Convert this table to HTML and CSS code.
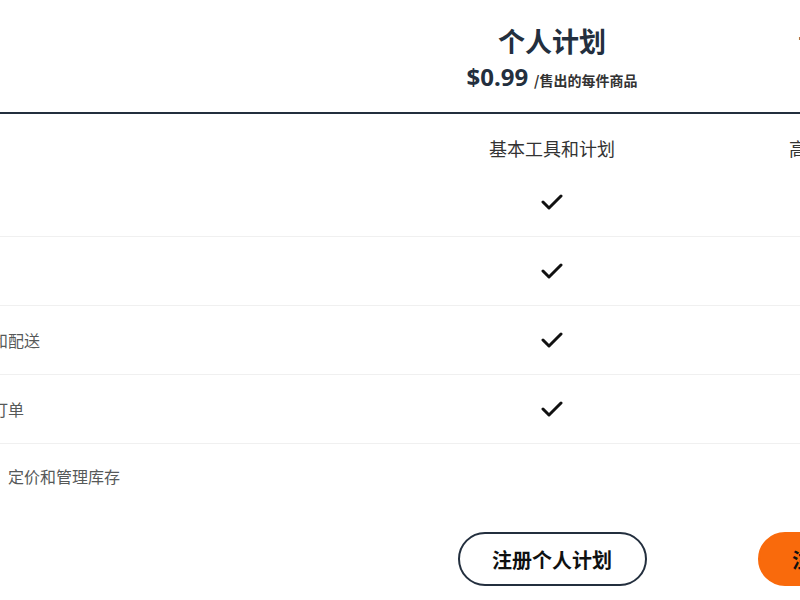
FILE: index.html
```html
<!DOCTYPE html>
<html lang="zh-CN">

<head>
  <meta charset="UTF-8">
  <title>销售计划对比</title>
  <link rel="stylesheet" href="styles.css">
</head>

<body>
  <div class="viewport">
    <div class="plans">

      <!-- Plan headers -->
      <div class="row header-row">
        <div class="cell feature"></div>
        <div class="cell plan">
          <h2 class="plan-title">个人计划</h2>
          <div class="plan-price"><span class="amount">$0.99</span><span class="unit">/售出的每件商品</span></div>
        </div>
        <div class="cell plan">
          <h2 class="plan-title">专业计划</h2>
          <div class="plan-price"><span class="amount">$39.99</span><span class="unit">/月</span></div>
        </div>
      </div>

      <!-- Plan summary -->
      <div class="row summary-row">
        <div class="cell feature"></div>
        <div class="cell plan">基本工具和计划</div>
        <div class="cell plan">高级工具和功能</div>
      </div>

      <!-- Features -->
      <div class="row feature-row">
        <div class="cell feature">全球销售</div>
        <div class="cell plan"><svg class="check" viewBox="0 0 22 18"><polyline points="2,9 8,15 20,3" /></svg></div>
        <div class="cell plan"><svg class="check" viewBox="0 0 22 18"><polyline points="2,9 8,15 20,3" /></svg></div>
      </div>
      <div class="row feature-row">
        <div class="cell feature">创建商品信息</div>
        <div class="cell plan"><svg class="check" viewBox="0 0 22 18"><polyline points="2,9 8,15 20,3" /></svg></div>
        <div class="cell plan"><svg class="check" viewBox="0 0 22 18"><polyline points="2,9 8,15 20,3" /></svg></div>
      </div>
      <div class="row feature-row">
        <div class="cell feature">管理订单履行和配送</div>
        <div class="cell plan"><svg class="check" viewBox="0 0 22 18"><polyline points="2,9 8,15 20,3" /></svg></div>
        <div class="cell plan"><svg class="check" viewBox="0 0 22 18"><polyline points="2,9 8,15 20,3" /></svg></div>
      </div>
      <div class="row feature-row">
        <div class="cell feature">管理您的全部订单</div>
        <div class="cell plan"><svg class="check" viewBox="0 0 22 18"><polyline points="2,9 8,15 20,3" /></svg></div>
        <div class="cell plan"><svg class="check" viewBox="0 0 22 18"><polyline points="2,9 8,15 20,3" /></svg></div>
      </div>
      <div class="row feature-row last">
        <div class="cell feature">批量上传商品、定价和管理库存</div>
        <div class="cell plan"></div>
        <div class="cell plan"><svg class="check" viewBox="0 0 22 18"><polyline points="2,9 8,15 20,3" /></svg></div>
      </div>

      <!-- Sign up buttons -->
      <div class="row action-row">
        <div class="cell feature"></div>
        <div class="cell plan"><button class="signup">注册个人计划</button></div>
        <div class="cell plan"><button class="signup primary">注册专业计划</button></div>
      </div>

    </div>
  </div>
</body>

</html>
```

FILE: styles.css
```css
body {
  margin: 0;
  padding: 0;
  background-color: #fff;
  font-family: "Noto Sans", "Noto Sans CJK SC", sans-serif;
  color: #0f1111;
}

/* the table is wider than the window, scrolled a little to the right */
.viewport {
  width: 800px;
  height: 600px;
  overflow: hidden;
}

.plans {
  width: 1106px;
  margin-left: -104px;
}

.row {
  display: grid;
  grid-template-columns: 506px 300px 300px;
}

.cell {
  display: flex;
  align-items: center;
}

.plan {
  flex-direction: column;
  justify-content: center;
  text-align: center;
}

.header-row {
  height: 114px;
  box-sizing: border-box;
  border-bottom: 2px solid #232f3e;
}

.header-row .plan {
  justify-content: flex-start;
  padding-top: 24px;
}

.plan-title {
  margin: 0;
  font-family: "Noto Sans CJK SC", sans-serif;
  font-size: 27px;
  line-height: 34px;
  font-weight: 700;
  color: #232f3e;
}

.plan-price {
  margin-top: 5px;
  display: flex;
  align-items: baseline;
  gap: 6px;
  line-height: 28px;
}

.amount {
  font-size: 24px;
  font-weight: 700;
  color: #232f3e;
}

.unit {
  font-family: "Noto Sans CJK SC", sans-serif;
  font-size: 14px;
  font-weight: 700;
  color: #333;
}

.summary-row {
  height: 54px;
  box-sizing: border-box;
  padding-top: 22px;
  align-items: start;
}

.summary-row .plan {
  font-family: "Noto Sans CJK SC", sans-serif;
  font-size: 18px;
  line-height: 24px;
  color: #333;
}

.feature-row {
  height: 69px;
  box-sizing: border-box;
  border-bottom: 1px solid #f0f0f0;
}

.feature-row.last {
  height: 64px;
  border-bottom: none;
}

.feature {
  font-family: "Noto Sans CJK SC", sans-serif;
  font-size: 16px;
  color: #565959;
  white-space: nowrap;
}

.check {
  width: 22px;
  height: 18px;
  fill: none;
  stroke: #111;
  stroke-width: 3;
  stroke-linecap: round;
  stroke-linejoin: round;
}

.action-row {
  padding-top: 24px;
}

.signup {
  width: 189px;
  height: 54px;
  border: 2px solid #232f3e;
  border-radius: 27px;
  background-color: #fff;
  font-family: "Noto Sans CJK SC", sans-serif;
  font-size: 20px;
  font-weight: 700;
  color: #0f1111;
  cursor: pointer;
}

.signup.primary {
  background-color: #f96a0c;
  border-color: #f96a0c;
}
```
